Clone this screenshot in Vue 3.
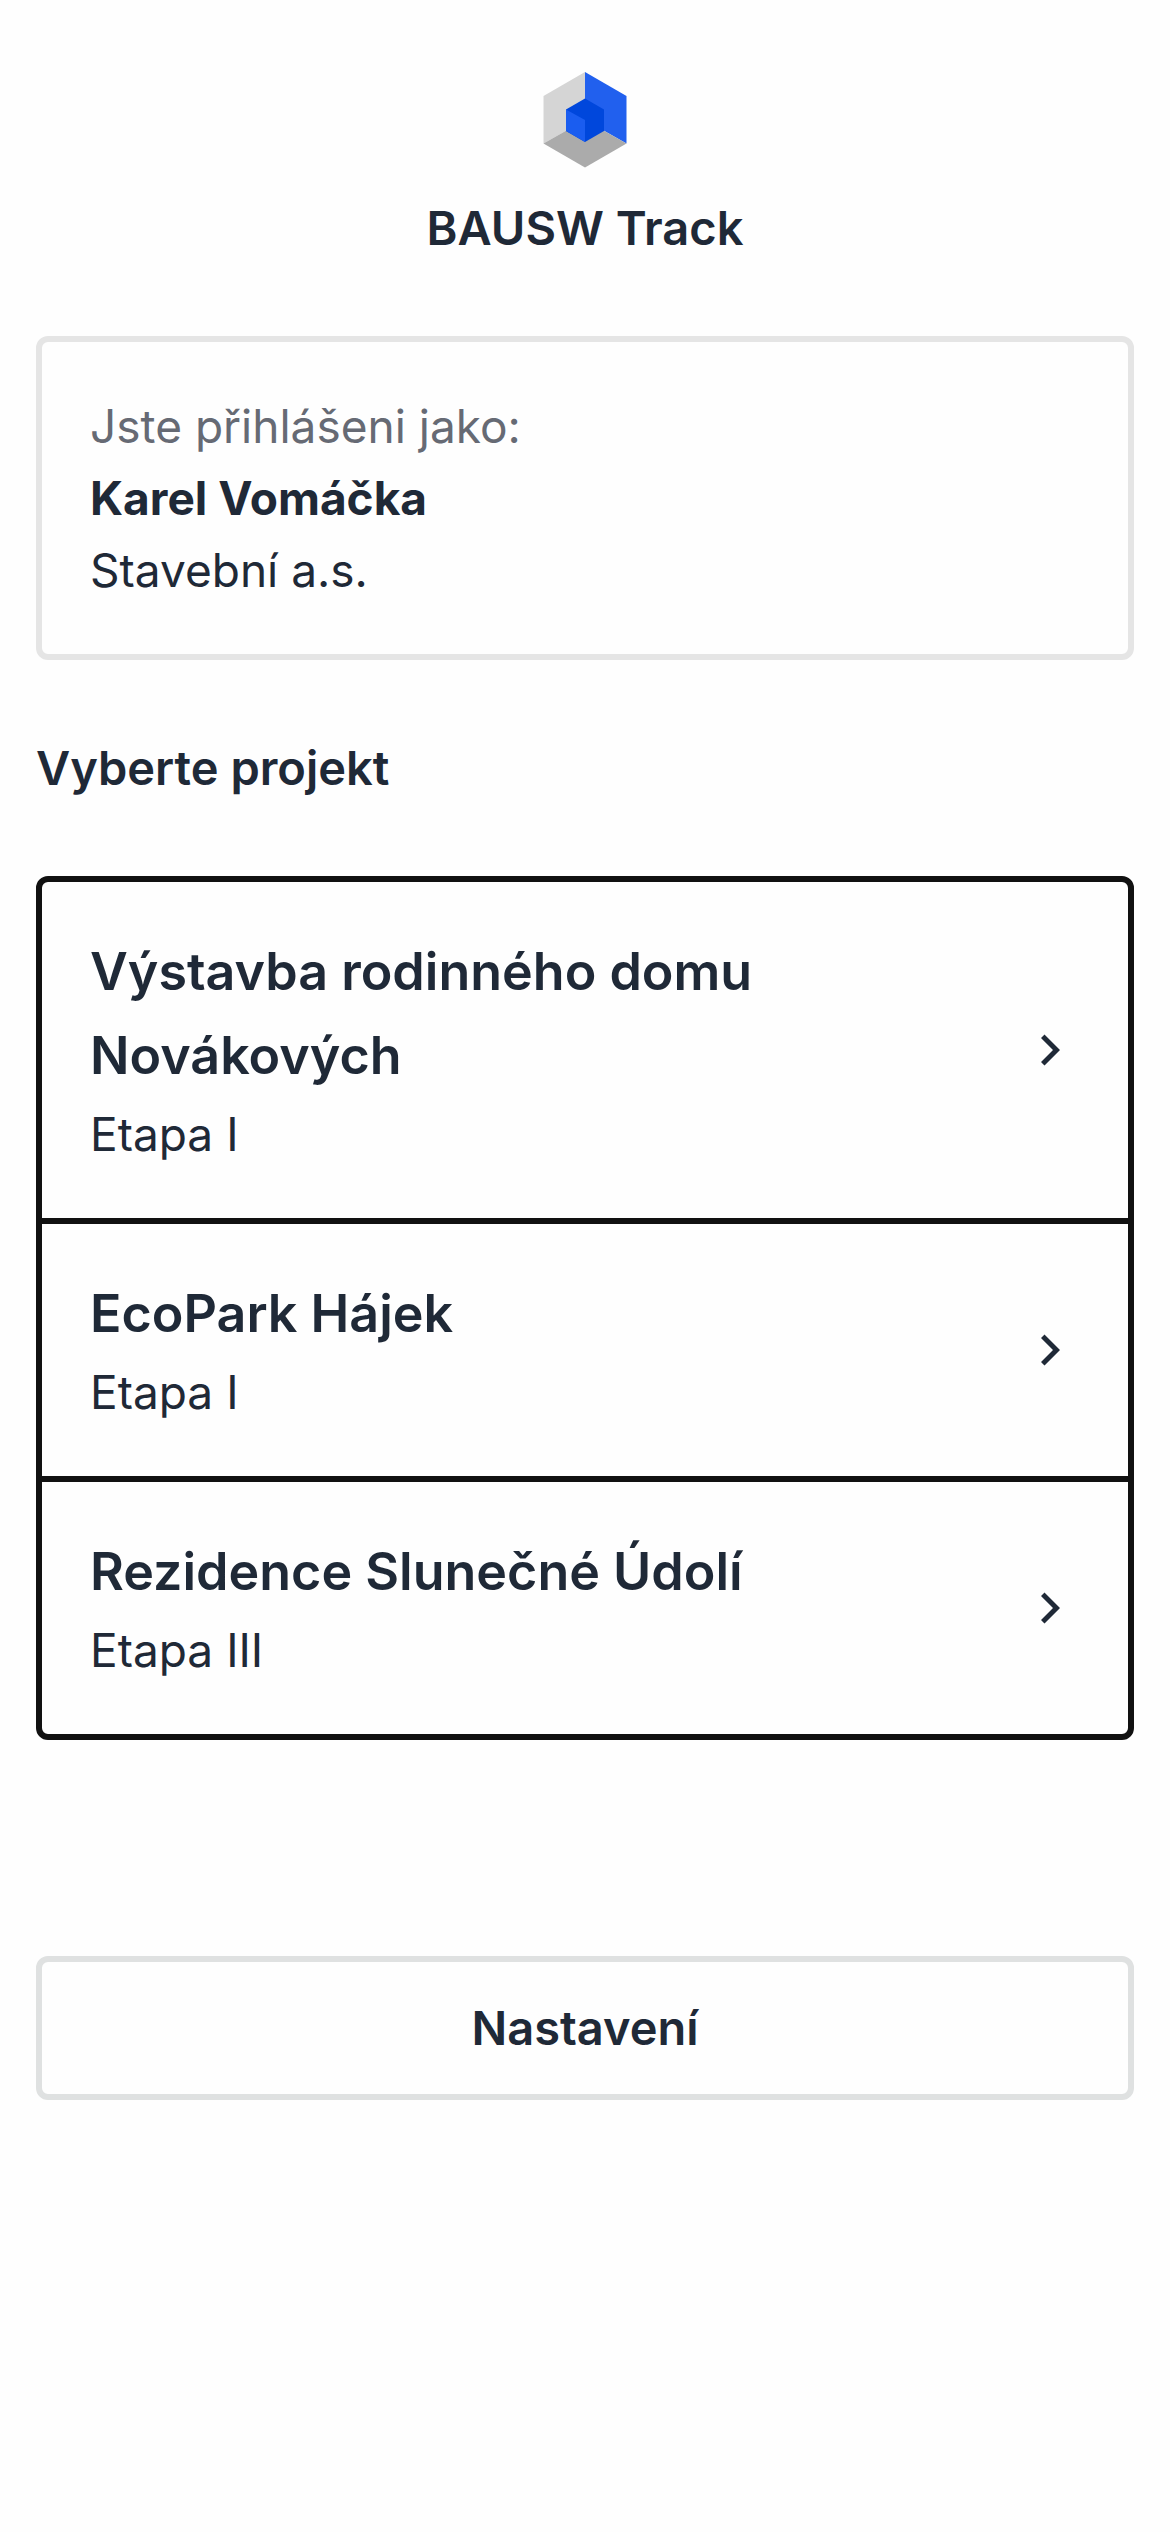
<script setup>
const user = { name: 'Karel Vomáčka', company: 'Stavební a.s.' }

const projects = [
  { id: 1, name: 'Výstavba rodinného domu Novákových', stage: 'Etapa I' },
  { id: 2, name: 'EcoPark Hájek', stage: 'Etapa I' },
  { id: 3, name: 'Rezidence Slunečné Údolí', stage: 'Etapa III' },
]
</script>

<template>
  <main class="page">
    <header class="brand">
      <svg class="logo" viewBox="0 0 84 96" aria-hidden="true">
        <path fill="#d5d5d5" d="M42 0 .5 24v47.500L42 48z" />
        <path fill="#2160ee" d="M42 0l41.500 24v47.500L42 48z" />
        <path fill="#ababab" d="M.5 71.500 42 48l41.500 23.500L42 95.500z" />
        <path fill="#0047dc" d="M42 26.500l19 11V59L42 70 23 59V37.500z" />
        <path fill="#1a5df0" d="M23 37.500 42 48v22L23 59z" />
      </svg>
      <h1 class="title">BAUSW Track</h1>
    </header>

    <section class="account">
      <p class="hint">Jste přihlášeni jako:</p>
      <p class="name">{{ user.name }}</p>
      <p>{{ user.company }}</p>
    </section>

    <h2 class="title">Vyberte projekt</h2>

    <ul class="projects">
      <li v-for="project in projects" :key="project.id">
        <a class="project" href="#">
          <span class="details">
            <span class="project-name">{{ project.name }}</span>
            <span>{{ project.stage }}</span>
          </span>
          <svg class="chevron" viewBox="0 0 60 60" aria-hidden="true">
            <path fill="currentColor" d="M24.500 14.500 40 30 24.500 45.500 21 42l12-12-12-12z" />
          </svg>
        </a>
      </li>
    </ul>

    <button class="settings" type="button">Nastavení</button>
  </main>
</template>

<style>
body {
  margin: 0;
  background: #fefefe;
}
</style>

<style scoped>
.page {
  display: flex;
  flex-direction: column;
  gap: 72px;
  padding: 72px 36px;
  font-family: Inter, "Liberation Sans", sans-serif;
  font-size: 46px;
  line-height: 72px;
  color: #1f2937;
}

.brand {
  display: flex;
  flex-direction: column;
  align-items: center;
  gap: 24px;
}

.logo {
  width: 84px;
  height: 96px;
}

.title {
  margin: 0;
  font-size: 47px;
  font-weight: 600;
}

.account {
  padding: 48px;
  border: 6px solid #e5e5e5;
  border-radius: 12px;
}

.account p {
  margin: 0;
}

.account .hint {
  color: #666a74;
}

.account .name {
  font-weight: 700;
}

.projects {
  margin: 0;
  padding: 0;
  list-style: none;
  border: 6px solid #111;
  border-radius: 12px;
}

.projects li + li {
  border-top: 6px solid #111;
}

.project {
  display: flex;
  align-items: center;
  justify-content: space-between;
  gap: 144px;
  padding: 48px;
  color: inherit;
  text-decoration: none;
}

.details {
  display: flex;
  flex-direction: column;
}

.project-name {
  font-size: 52px;
  font-weight: 600;
  line-height: 84px;
}

.chevron {
  flex: none;
  width: 60px;
  height: 60px;
}

.settings {
  margin-top: 144px;
  padding: 30px 48px;
  border: 6px solid #dfe1e1;
  border-radius: 12px;
  background: transparent;
  color: inherit;
  font: inherit;
  font-size: 47px;
  font-weight: 600;
}
</style>
